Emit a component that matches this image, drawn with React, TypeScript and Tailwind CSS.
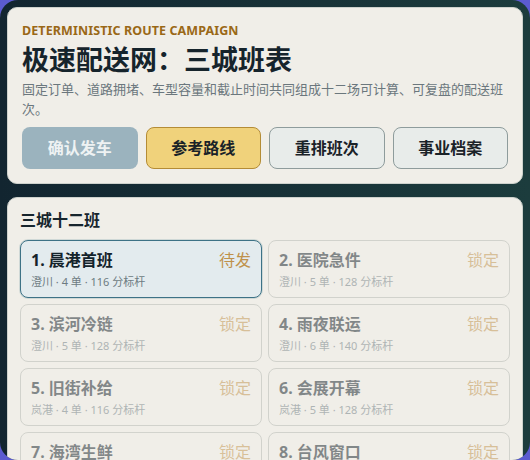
import { ReactElement } from "react";

type Run = {
  id: number;
  name: string;
  city: string;
  orders: number;
  par: number;
  status: string;
  active?: boolean;
};

const runs: Run[] = [
  { id: 1, name: "晨港首班", city: "澄川", orders: 4, par: 116, status: "待发", active: true },
  { id: 2, name: "医院急件", city: "澄川", orders: 5, par: 128, status: "锁定" },
  { id: 3, name: "滨河冷链", city: "澄川", orders: 5, par: 128, status: "锁定" },
  { id: 4, name: "雨夜联运", city: "澄川", orders: 6, par: 140, status: "锁定" },
  { id: 5, name: "旧街补给", city: "岚港", orders: 4, par: 116, status: "锁定" },
  { id: 6, name: "会展开幕", city: "岚港", orders: 5, par: 128, status: "锁定" },
  { id: 7, name: "海湾生鲜", city: "岚港", orders: 5, par: 128, status: "锁定" },
  { id: 8, name: "台风窗口", city: "岚港", orders: 6, par: 140, status: "锁定" },
];

function RunCard({ run }: { run: Run }): ReactElement {
  return (
    <div
      className={
        run.active
          ? "flex justify-between rounded-lg border border-[#3d7286] bg-[#e3ebee] px-2.5 py-2 shadow-[0_0_0_1px_rgba(61,114,134,0.18)]"
          : "flex justify-between rounded-lg border border-[#b4b8b2] bg-[#f0eee8] px-2.5 py-2 opacity-50"
      }
    >
      <div className="flex flex-col">
        <span className="text-[16px] leading-[22px] font-bold text-[#14232b]">
          {run.id}. {run.name}
        </span>
        <span className="mt-[3px] text-[11px] leading-[15px] text-[#6d7b82]">
          {run.city} · {run.orders} 单 · {run.par} 分标杆
        </span>
      </div>
      <span className="text-[16px] leading-[22px] text-[#bf914a]">{run.status}</span>
    </div>
  );
}

export default function App(): ReactElement {
  return (
    <div
      className="h-[460px] w-[530px] overflow-hidden bg-[#5b5bd0]"
      style={{ fontFamily: '"Noto Sans", "Noto Sans CJK SC", sans-serif' }}
    >
      <div className="flex h-[460px] flex-col gap-[13px] overflow-hidden rounded-[18px] bg-gradient-to-r from-[#122530] to-[#1c3c3d] p-[7px]">
        <section className="rounded-[10px] border border-[#cdd1cc] bg-[#f0eee8] px-[14px] pt-[15px] pb-[14px]">
          <p className="text-[12.5px] leading-4 font-bold tracking-[0.1px] text-[#9a6816] uppercase">
            Deterministic Route Campaign
          </p>
          <h1 className="mt-[5px] text-[27px] leading-8 font-bold text-[#16242c]">
            极速配送网：三城班表
          </h1>
          <p className="mt-[3px] text-[13px] leading-5 text-[#6b777d]">
            固定订单、道路拥堵、车型容量和截止时间共同组成十二场可计算、可复盘的配送班次。
          </p>
          <div className="mt-2 grid grid-cols-4 gap-2">
            <button className="h-[42px] rounded-lg bg-[#9bb3be] text-[16px] font-bold text-[#eef2f3]">
              确认发车
            </button>
            <button className="h-[42px] rounded-lg border border-[#b48c36] bg-[#f0d27b] text-[16px] font-bold text-[#1a2228]">
              参考路线
            </button>
            <button className="h-[42px] rounded-lg border border-[#8e9c9c] bg-[#e8ecea] text-[16px] font-bold text-[#1a2228]">
              重排班次
            </button>
            <button className="h-[42px] rounded-lg border border-[#8e9c9c] bg-[#e8ecea] text-[16px] font-bold text-[#1a2228]">
              事业档案
            </button>
          </div>
        </section>

        <section className="shrink-0 rounded-[10px] border border-[#cdd1cc] bg-[#f0eee8] px-3 pt-[11px] pb-3">
          <h2 className="text-[16px] leading-[22px] font-semibold text-[#17252d]">三城十二班</h2>
          <div className="mt-[9px] grid grid-cols-2 gap-1.5">
            {runs.map((run) => (
              <RunCard key={run.id} run={run} />
            ))}
          </div>
        </section>
      </div>
    </div>
  );
}
